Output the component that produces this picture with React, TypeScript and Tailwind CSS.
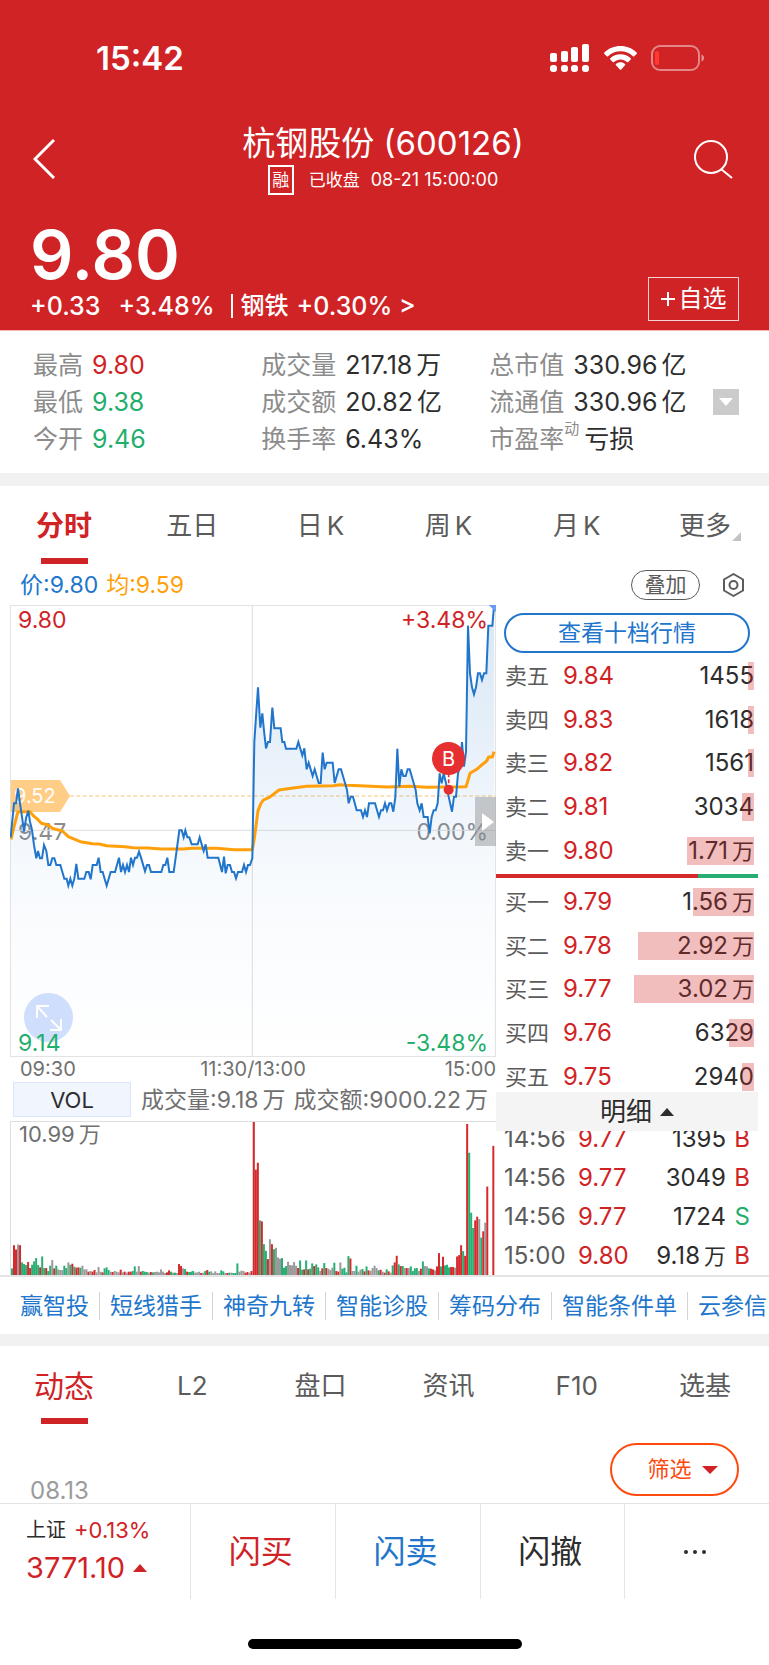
import { useState } from 'react';
import clsx from 'clsx';

interface Level {
  name: string;
  price: string;
  volume: string;
  unit?: string;
  bar: number;
}

interface Trade {
  time: string;
  price: string;
  volume: string;
  unit?: string;
  side: 'B' | 'S';
}

const stats = [
  [
    { label: '最高', value: '9.80', color: 'text-[#d02326]' },
    { label: '最低', value: '9.38', color: 'text-[#1fae6c]' },
    { label: '今开', value: '9.46', color: 'text-[#1fae6c]' },
  ],
  [
    { label: '成交量', value: '217.18', unit: '万', color: 'text-[#2d2d2d]' },
    { label: '成交额', value: '20.82', unit: '亿', color: 'text-[#2d2d2d]' },
    { label: '换手率', value: '6.43%', color: 'text-[#2d2d2d]' },
  ],
  [
    { label: '总市值', value: '330.96', unit: '亿', color: 'text-[#2d2d2d]' },
    { label: '流通值', value: '330.96', unit: '亿', color: 'text-[#2d2d2d]' },
    { label: '市盈率', sup: '动', value: '亏损', color: 'text-[#2d2d2d]' },
  ],
];

const chartTabs = ['分时', '五日', '日K', '周K', '月K', '更多'];
const infoTabs = ['动态', 'L2', '盘口', '资讯', 'F10', '选基'];
const tools = ['赢智投', '短线猎手', '神奇九转', '智能诊股', '筹码分布', '智能条件单', '云参信'];

const asks: Level[] = [
  { name: '卖五', price: '9.84', volume: '1455', bar: 6 },
  { name: '卖四', price: '9.83', volume: '1618', bar: 6 },
  { name: '卖三', price: '9.82', volume: '1561', bar: 6 },
  { name: '卖二', price: '9.81', volume: '3034', bar: 12 },
  { name: '卖一', price: '9.80', volume: '1.71', unit: '万', bar: 67 },
];

const bids: Level[] = [
  { name: '买一', price: '9.79', volume: '1.56', unit: '万', bar: 61 },
  { name: '买二', price: '9.78', volume: '2.92', unit: '万', bar: 116 },
  { name: '买三', price: '9.77', volume: '3.02', unit: '万', bar: 120 },
  { name: '买四', price: '9.76', volume: '6329', bar: 25 },
  { name: '买五', price: '9.75', volume: '2940', bar: 12 },
];

const trades: Trade[] = [
  { time: '14:56', price: '9.77', volume: '1395', side: 'B' },
  { time: '14:56', price: '9.77', volume: '3049', side: 'B' },
  { time: '14:56', price: '9.77', volume: '1724', side: 'S' },
  { time: '15:00', price: '9.80', volume: '9.18', unit: '万', side: 'B' },
];

const pricePoints =
  '32,712 42,610 48,610 54,565 60,610 66,650 72,695 78,655 85,632 90,665 96,690 102,735 109,775 114,753 120,775 126,775 132,735 139,753 145,795 151,795 157,775 163,775 169,795 181,795 193,836 200,836 205,857 211,836 217,857 223,836 229,792 235,836 253,836 259,816 266,816 272,838 278,795 290,795 296,773 302,816 308,816 320,857 332,816 345,816 357,773 363,816 369,795 375,816 381,795 387,816 393,773 399,795 405,773 411,773 417,755 423,773 435,814 441,795 447,795 453,816 484,816 490,795 496,795 502,773 508,816 521,816 527,773 538,691 545,691 551,712 556,691 562,712 568,712 575,733 593,733 599,712 605,733 611,753 617,733 623,773 655,773 666,816 672,770 677,820 683,795 690,795 696,816 702,816 708,835 714,816 726,816 732,795 738,816 744,795 750,795 757,775 ' +
  '763,425 774,262 781,383 787,340 792,392 798,445 804,426 810,426 817,323 823,385 842,385 847,426 853,426 858,446 889,446 895,426 907,466 913,445 920,508 926,488 938,528 944,508 956,549 962,549 968,458 974,508 980,488 998,488 1004,549 1016,508 1023,508 1035,549 1041,570 1046,610 1052,590 1059,590 1070,631 1083,631 1089,651 1095,631 1101,651 1107,610 1125,610 1137,651 1143,631 1149,631 1155,610 1161,631 1168,610 1174,610 1180,635 1186,592 1192,446 1198,560 1204,508 1210,528 1217,528 1223,508 1229,508 1241,549 1247,570 1252,610 1259,631 1265,610 1271,651 1283,651 1289,700 1295,651 1301,631 1307,631 1313,610 1319,520 1325,550 1331,520 1337,545 1346,590 1356,635 1362,590 1368,590 1374,520 1380,500 1386,426 1392,500 1398,455 1404,77 1410,220 1416,262 1422,283 1428,262 1434,220 1440,220 1446,240 1452,220 1459,220 1465,77 1477,77 1482,20';

const averagePoints =
  '33,718 42,680 54,635 90,635 103,650 112,657 124,670 145,675 157,685 187,693 205,710 241,725 278,731 297,732 320,737 375,740 400,743 444,744 484,747 550,747 575,745 650,745 702,749 757,749 763,715 774,632 782,612 790,600 808,592 837,570 885,563 920,559 1000,557 1020,554 1040,556 1080,557 1160,561 1230,559 1280,562 1398,560 1402,548 1410,520 1430,508 1445,495 1460,483 1466,471 1477,471 1482,455';

// r = up, g = down, k = unchanged, followed by the bar height
const morning =
  'g20 r90 r77 k92 r90 g38 g33 g30 r39 r21 g31 g41 g51 g30 r23 g56 g21 r21 g12 g28 k45 r20 g28 k17 k15 k15 g28 g21 k38 g31 r34 g25 r22 r23 g22 k28 k17 k17 r10 k12 r10 r15 k8 k24 k10 r8 g20 g23 g15 k10 r9 k12 k10 k8 r16 k8 r10 k7 r10 r10 g12 g26 k10 k27 r10 g12 g10 g9 k7 r9 g8 k9 k10 k8 k17 k10 k6 r8 r14 g10 k7 g7 k6 r33 r27 k20 g18 r10 g9 g10 g12 k7 k8 k10 r6 k7 g12 r15 g10 k11 k6 k11 k6 k6 g14 g11 k6 r6 g7 k7 g6 g6 g35 k10 k13 k12 r7 r9 k7 r12';
const afternoon =
  'r462 r318 r339 g165 r162 g93 g73 r48 k108 r93 g78 k82 k53 k49 g51 g22 g27 k40 k30 k29 k39 k28 r21 g44 g16 r17 g44 r17 g19 g35 r27 g32 g23 k12 r20 g36 r21 k19 k15 k22 g37 r12 r10 k38 g19 g22 g8 g57 r50 k12 k12 g28 k10 k16 g18 r11 g26 r14 k12 k21 k28 k21 g14 r16 k10 r7 g17 r11 k7 g29 r38 r58 g32 r27 g27 k21 r21 k21 g26 g12 g20 g21 k12 r19 g41 k27 k26 g20 r19 r17 k14 r26 r66 g26 r55 g29 g31 g23 r24 r24 k22 r56 r60 r90 g72 r58 r456 g369 g188 g142 r165 r176 k169 g113 r132 k158 r267 k0 k0 r390';

const barColors: Record<string, string> = { r: '#d6292b', g: '#27ae73', k: '#999999' };

function VolumeBars({ data, start }: { data: string; start: number }) {
  return (
    <g>
      {data.split(' ').map((bar, i) => {
        const height = Number(bar.slice(1));
        return <rect key={i} x={start + i * 6.05} y={526 - height} width={6} height={height} fill={barColors[bar[0]]} />;
      })}
    </g>
  );
}

function StatusBar() {
  return (
    <div className="flex h-[116px] items-center justify-between pr-16 pl-24">
      <span className="text-[33px] leading-10 font-semibold">15:42</span>
      <div className="flex items-center gap-[14px]">
        <svg className="h-7 w-10" viewBox="0 0 40 28" fill="#fff">
          <rect x="0" y="9" width="7" height="9" rx="2" />
          <rect x="11" y="7" width="7" height="11" rx="2" />
          <rect x="21" y="3" width="7" height="15" rx="2" />
          <rect x="32" y="0" width="7" height="18" rx="2" />
          <rect x="0" y="21" width="7" height="7" rx="3" />
          <rect x="11" y="21" width="7" height="7" rx="3" />
          <rect x="21" y="21" width="7" height="7" rx="3" />
          <rect x="32" y="21" width="7" height="7" rx="3" />
        </svg>
        <svg className="h-6 w-[33px]" viewBox="0 0 33 24" fill="#fff">
          <path d="M16.5 0C22.600 0 28.400 2.300 32.600 6.500a1 1 0 0 1 0 1.400l-2.400 2.400a1 1 0 0 1-1.300 0C25.600 7.100 21.200 5.300 16.500 5.300S7.400 7.100 4.100 10.300a1 1 0 0 1-1.300 0L.4 7.900a1 1 0 0 1 0-1.400C4.600 2.300 10.400 0 16.500 0Z" />
          <path d="M16.500 8.200c3.900 0 7.500 1.500 10.200 4a1 1 0 0 1 0 1.400l-2.400 2.400a1 1 0 0 1-1.300 0c-1.800-1.600-4.100-2.500-6.500-2.500s-4.700.9-6.500 2.500a1 1 0 0 1-1.300 0l-2.400-2.400a1 1 0 0 1 0-1.400c2.700-2.500 6.300-4 10.200-4Z" />
          <path d="M16.500 16.300c1.700 0 3.300.6 4.500 1.600a1 1 0 0 1 0 1.400l-3.800 4.200a1 1 0 0 1-1.400 0L12 19.300a1 1 0 0 1 0-1.400c1.200-1 2.800-1.600 4.500-1.600Z" />
        </svg>
        <svg className="h-[26px] w-[54px]" viewBox="0 0 54 26">
          <rect x="1" y="1" width="47" height="24" rx="8" fill="none" stroke="#fff" strokeOpacity="0.45" strokeWidth="2" />
          <rect x="4" y="6" width="4" height="14" rx="2" fill="#ff3b30" />
          <path d="M50.500 9.500c1.800.6 2.500 2 2.500 3.500s-.7 2.900-2.500 3.500Z" fill="#fff" fillOpacity="0.5" />
        </svg>
      </div>
    </div>
  );
}

function Tabs({ items, bold }: { items: string[]; bold?: boolean }) {
  const [active, setActive] = useState(items[0]);

  return (
    <nav className="grid h-[78px] grid-cols-6">
      {items.map((item) => (
        <button
          key={item}
          type="button"
          onClick={() => setActive(item)}
          className={clsx(
            'relative flex items-start justify-center pt-5 leading-10',
            item === active ? 'text-[#d02326]' : 'text-[26px] text-[#5b5b5b]',
            item === active && (bold ? 'text-[28px] font-bold' : 'text-[30px]')
          )}
        >
          {item.endsWith('K') ? (
            <span className="flex gap-1">
              <span>{item[0]}</span>
              <span>K</span>
            </span>
          ) : (
            item
          )}
          {item === '更多' && (
            <svg className="absolute right-7 bottom-[23px] h-[9px] w-[9px]" viewBox="0 0 8 8">
              <path d="M8 0v8H0Z" fill="#c4c4c4" />
            </svg>
          )}
          {item === active && <span className="absolute bottom-0 h-[6px] w-[47px] bg-[#d02326]" />}
        </button>
      ))}
    </nav>
  );
}

function LevelTable({ levels, label }: { levels: Level[]; label: string }) {
  return (
    <table aria-label={label} className="h-[219px] w-full text-2xl leading-7">
      <tbody>
        {levels.map((level) => (
          <tr key={level.name}>
            <td className="w-[67px] p-0 pl-[9px] text-[22px] leading-7 text-[#5b5b5b]">{level.name}</td>
            <td className="p-0 leading-7 text-[#d02326]">{level.price}</td>
            <td className="p-0 pr-1">
              <div className="relative flex h-7 items-center justify-end gap-1 text-[#2d2d2d]">
                <span>{level.volume}</span>
                {level.unit && <span className="text-[22px]">{level.unit}</span>}
                <span className="absolute top-0 right-0 h-7 bg-[#d02326]/30" style={{ width: level.bar }} />
              </div>
            </td>
          </tr>
        ))}
      </tbody>
    </table>
  );
}

function PriceChart() {
  return (
    <div className="relative h-[452px] text-[23px] leading-[30px]">
      <span className="absolute top-0 left-2 text-[#d02326]">9.80</span>
      <span className="absolute top-0 right-2 text-[#d02326]">+3.48%</span>
      <span className="absolute top-[212px] left-2 text-[#8c8c8c]">9.47</span>
      <span className="absolute top-[212px] right-2 text-[#8c8c8c]">0.00%</span>
      <div className="absolute top-[175px] left-0 flex h-8 w-[60px] items-center">
        <svg className="absolute inset-0 h-full w-full" viewBox="0 0 60 32">
          <path d="M0 0H50L60 16L50 32H0Z" fill="#ffcd85" />
        </svg>
        <span className="relative pl-1 text-xl text-white">9.52</span>
      </div>
      <button
        type="button"
        aria-label="全屏"
        className="absolute top-[388px] left-[14px] flex h-[49px] w-[49px] items-center justify-center rounded-full bg-[#d0dffd]"
      >
        <svg className="h-[26px] w-[26px]" viewBox="0 0 26 26" fill="none" stroke="#fff" strokeWidth="2">
          <path d="M1 13V1H13M1 1L11 12M15 15L25 25M25 14V25H14" />
        </svg>
      </button>
      <span className="absolute -bottom-px left-2 text-[#1fae6c]">9.14</span>
      <span className="absolute right-2 -bottom-px text-[#1fae6c]">-3.48%</span>
      <svg
        className="pointer-events-none absolute inset-0 h-full w-full"
        viewBox="30 15 1458 1356"
        preserveAspectRatio="none"
        fill="none"
      >
        <defs>
          <linearGradient id="area" x1="0" y1="0" x2="0" y2="1">
            <stop offset="0" stopColor="#2176cc" stopOpacity="0.18" />
            <stop offset="0.6" stopColor="#2176cc" stopOpacity="0.035" />
            <stop offset="1" stopColor="#2176cc" stopOpacity="0" />
          </linearGradient>
        </defs>
        <path d="M31 15V1370M1486 15V1370M30 16H1488M30 1370H1488M757 15V1370M30 691H1488" stroke="#dedede" strokeWidth="3" />
        <path d="M210 588H1488" stroke="#fcd9a6" strokeWidth="4" strokeDasharray="12 7" />
        <polygon points={`32,1370 ${pricePoints} 1482,1370`} fill="url(#area)" />
        <polyline points={averagePoints} stroke="#ff9f0a" strokeWidth="9" strokeLinejoin="round" />
        <polyline points={pricePoints} stroke="#2176cc" strokeWidth="6" />
        <path d="M1466 15H1488V36Z" fill="#6a9cf5" />
        <path d="M1346 520V560" stroke="#e62f31" strokeWidth="5" strokeDasharray="12 6" />
        <circle cx="1346" cy="569" r="15" fill="#e62f31" />
      </svg>
      <span className="absolute top-[137px] right-[31px] flex h-[33px] w-[33px] items-center justify-center rounded-full bg-[#e62f31] text-xl text-white">
        B
      </span>
      <button
        type="button"
        aria-label="收起盘口"
        className="absolute top-[192px] right-0 flex h-[49px] w-[21px] items-center justify-end bg-[#8c8c8c]/45"
      >
        <svg className="h-[18px] w-[14px]" viewBox="0 0 14 18">
          <path d="M0 0L12 9L0 18Z" fill="#fff" />
        </svg>
      </button>
    </div>
  );
}

export default function App() {
  return (
    <div className="w-full overflow-hidden bg-white font-['Inter','Noto_Sans_CJK_SC',sans-serif] text-[#2d2d2d]">
      {/* Header */}
      <header className="h-[331px] border-b border-[#f3b4b5] bg-[#d02326] text-white">
        <StatusBar />
        <div className="flex h-[86px] items-center justify-between pr-9 pl-[33px]">
          <button type="button" aria-label="返回" className="w-10">
            <svg className="h-10 w-[22px]" viewBox="0 0 22 40" fill="none" stroke="#fff" strokeWidth="3">
              <path d="M21 1L2 20L21 39" />
            </svg>
          </button>
          <div className="flex flex-col items-center">
            <h1 className="text-[33px] leading-10">杭钢股份 (600126)</h1>
            <div className="mt-[2px] flex items-center text-[18px] leading-[30px]">
              <span className="mr-[15px] flex h-[30px] w-[26px] items-center justify-center border-2 text-[17px]">融</span>
              <span className="mr-[11px] text-[17px]">已收盘</span>
              <span>08-21 15:00:00</span>
            </div>
          </div>
          <button type="button" aria-label="搜索" className="w-10">
            <svg className="h-10 w-10" viewBox="0 0 40 40" fill="none" stroke="#fff" strokeWidth="2">
              <circle cx="18" cy="18" r="16" />
              <path d="M28 30L39 39" />
            </svg>
          </button>
        </div>
        <div className="flex items-end justify-between pr-[30px] pl-[30px]">
          <div>
            <p className="mt-[14px] text-[68px] leading-[76px] font-semibold">9.80</p>
            <p className="mb-2 flex items-center text-[25px] leading-7 font-medium">
              <span>+0.33</span>
              <span className="ml-[18px]">+3.48%</span>
              <span className="ml-4 h-6 w-[2px] bg-white" />
              <a href="#sector" className="ml-2 flex items-center gap-2">
                <span className="text-2xl leading-7">钢铁</span>
                <span>+0.30% &gt;</span>
              </a>
            </p>
          </div>
          <button type="button" className="mb-[7px] flex h-11 w-[91px] items-center justify-center gap-1 border border-white/80 text-2xl">
            <svg className="h-[14px] w-[14px]" viewBox="0 0 14 14" stroke="#fff" strokeWidth="2">
              <path d="M7 0V14M0 7H14" />
            </svg>
            自选
          </button>
        </div>
      </header>

      {/* Stats */}
      <section className="relative flex h-[142px] pt-[15px] pl-[33px]">
        {stats.map((column, i) => (
          <dl key={i} className="w-[31%] whitespace-nowrap">
            {column.map((item) => (
              <div key={item.label} className="flex h-[37px] items-center text-[25px] leading-9">
                <dt className="flex text-[#8c8c8c]">
                  {item.label}
                  {item.sup && <sup className="top-0 -mt-1 text-[15px] leading-6">{item.sup}</sup>}
                </dt>
                <dd className={clsx('flex gap-1', item.sup ? 'ml-[5px]' : 'ml-[9px]', item.color)}>
                  <span>{item.value}</span>
                  {item.unit && <span>{item.unit}</span>}
                </dd>
              </div>
            ))}
          </dl>
        ))}
        <button
          type="button"
          aria-label="展开"
          className="absolute top-[58px] right-[30px] flex h-[26px] w-[26px] items-center justify-center bg-[#cbcbcb]"
        >
          <svg className="h-2 w-[14px]" viewBox="0 0 14 8">
            <path d="M0 0H14L7 8Z" fill="#fff" />
          </svg>
        </button>
      </section>
      <div className="h-[13px] bg-[#f1f1f1]" />

      {/* Chart tabs */}
      <Tabs items={chartTabs} bold />
      <div className="flex h-[41px] items-center justify-between pr-[25px] pl-5 text-[23px] leading-7">
        <p className="flex gap-2">
          <span className="text-[#2176cc]">价:9.80</span>
          <span className="text-[#ff9f0a]">均:9.59</span>
        </p>
        <div className="flex items-center gap-[23px]">
          <button type="button" className="h-[30px] w-[69px] rounded-full border border-[#5b5b5b] text-[21px] leading-7 text-[#5b5b5b]">
            叠加
          </button>
          <button type="button" aria-label="设置">
            <svg className="h-6 w-[21px]" viewBox="0 0 21 24" fill="none" stroke="#5b5b5b" strokeWidth="2">
              <path d="M10.500 1L20 6.500V17.500L10.500 23L1 17.500V6.500Z" strokeLinejoin="round" />
              <circle cx="10.500" cy="12" r="4" />
            </svg>
          </button>
        </div>
      </div>

      {/* Chart and order book */}
      <section className="flex border-b-2 border-[#e4e4e4]">
        <div className="min-w-0 flex-1 pl-[10px]">
          <PriceChart />
          <div className="grid h-[25px] grid-cols-[1fr_auto_1fr] text-xl leading-6 text-[#707070]">
            <span className="pl-[10px]">09:30</span>
            <span>11:30/13:00</span>
            <span className="text-right">15:00</span>
          </div>
          <div className="flex h-[35px] items-center gap-[10px] pl-[3px] text-[23px] leading-8">
            <button type="button" className="h-[35px] w-[118px] shrink-0 border border-[#dbe6fd] bg-[#f0f5fe] text-[22px] leading-8">
              VOL
            </button>
            <p className="flex gap-2 whitespace-nowrap text-[#707070]">
              <span className="flex gap-1">
                <span>成交量:9.18</span>
                <span>万</span>
              </span>
              <span className="flex gap-1">
                <span>成交额:9000.22</span>
                <span>万</span>
              </span>
            </p>
          </div>
          <div className="relative mt-1 h-[154px] border-t border-l border-[#dedede]">
            <p className="absolute top-0 left-2 flex gap-1 text-[22px] leading-6 text-[#707070]">
              <span>10.99</span>
              <span>万</span>
            </p>
            <svg className="h-full w-full" viewBox="30 64 1458 462" preserveAspectRatio="none">
              <path d="M757 64V526" stroke="#dedede" strokeWidth="3" />
              <VolumeBars data={morning} start={30} />
              <VolumeBars data={afternoon} start={757} />
            </svg>
          </div>
        </div>

        <div className="mr-[11px] w-[262px] pt-2">
          <button
            type="button"
            className="mr-2 ml-2 block h-10 w-[246px] rounded-full border-2 border-[#2176cc] text-[23px] leading-9 text-[#2176cc]"
          >
            查看十档行情
          </button>
          <div className="mt-px">
            <LevelTable levels={asks} label="卖盘" />
          </div>
          <div className="mt-px flex h-1 bg-[#27ae73]">
            <div className="w-[77%] bg-[#d6292b]" />
          </div>
          <div className="mt-[2px] h-[212px] overflow-hidden">
            <LevelTable levels={bids} label="买盘" />
          </div>
          <button type="button" className="flex h-[39px] w-full items-center justify-center gap-2 bg-[#f4f4f4] pl-5 text-[26px] leading-9">
            明细
            <svg className="h-2 w-[14px]" viewBox="0 0 14 8">
              <path d="M7 0L14 8H0Z" fill="#2d2d2d" />
            </svg>
          </button>
          <div className="flex h-[144px] flex-col justify-end overflow-hidden">
            <table aria-label="成交明细" className="w-full text-2xl leading-7">
              <tbody>
                {trades.map((trade, i) => (
                  <tr key={i} className="h-[39px]">
                    <td className="w-[82px] p-0 pt-px pl-[8px] text-[#5b5b5b]">{trade.time}</td>
                    <td className="p-0 pt-px text-[#d02326]">{trade.price}</td>
                    <td className="p-0 pt-px">
                      <div className="flex justify-end gap-1">
                        <span>{trade.volume}</span>
                        {trade.unit && <span className="text-[22px]">{trade.unit}</span>}
                      </div>
                    </td>
                    <td className={clsx('w-8 p-0 pt-px pr-2 text-right', trade.side === 'B' ? 'text-[#d02326]' : 'text-[#1fae6c]')}>
                      {trade.side}
                    </td>
                  </tr>
                ))}
              </tbody>
            </table>
          </div>
        </div>
      </section>

      {/* Tools */}
      <nav className="flex h-[57px] items-center overflow-hidden pl-[10px]">
        {tools.map((tool, i) => (
          <a
            key={tool}
            href="#tools"
            className={clsx(
              'shrink-0 px-[10px] text-[23px] leading-7 text-[#2176cc]',
              i > 0 && 'border-l border-[#d4d4d4]'
            )}
          >
            {tool}
          </a>
        ))}
      </nav>
      <div className="h-3 bg-[#f1f1f1]" />

      {/* News */}
      <Tabs items={infoTabs} />
      <section className="flex h-[79px] items-end justify-between pr-[30px] pl-[30px]">
        <time className="text-2xl leading-6 text-[#9b9b9b]">08.13</time>
        <button
          type="button"
          className="mb-[7px] flex h-[53px] w-[129px] items-center justify-center gap-[10px] rounded-full border-2 border-[#ff4a0e] pl-4 text-[22px] text-[#ff4a0e]"
        >
          筛选
          <svg className="h-2 w-4" viewBox="0 0 16 8">
            <path d="M0 0H16L8 8Z" fill="#d02326" />
          </svg>
        </button>
      </section>

      {/* Bottom bar */}
      <footer className="border-t border-[#e4e4e4]">
        <div className="flex h-[95px]">
          <div className="w-[190px] pt-3 pl-[26px]">
            <p className="flex items-center gap-2 text-[22px] leading-7">
              <span className="text-xl leading-7">上证</span>
              <span className="text-[#d02326]">+0.13%</span>
            </p>
            <p className="mt-[6px] flex items-center gap-2 text-[29px] leading-9 text-[#d02326]">
              3771.10
              <svg className="h-2 w-[14px]" viewBox="0 0 14 8">
                <path d="M7 0L14 8H0Z" fill="#d02326" />
              </svg>
            </p>
          </div>
          <div className="grid flex-1 grid-cols-4 text-[32px]">
            <button type="button" className="border-l border-[#e4e4e4] pr-1 text-[#d02326]">
              闪买
            </button>
            <button type="button" className="border-l border-[#e4e4e4] pr-1 text-[#2176cc]">
              闪卖
            </button>
            <button type="button" className="border-l border-[#e4e4e4] pr-1">
              闪撤
            </button>
            <button type="button" aria-label="更多操作" className="flex items-center justify-center border-l border-[#e4e4e4] pr-1">
              <svg className="h-1 w-[22px]" viewBox="0 0 22 4" fill="#2d2d2d">
                <circle cx="2" cy="2" r="2" />
                <circle cx="11" cy="2" r="2" />
                <circle cx="20" cy="2" r="2" />
              </svg>
            </button>
          </div>
        </div>
        <div className="flex h-[66px] items-end justify-center pb-4">
          <div className="h-[10px] w-[274px] rounded-full bg-black" />
        </div>
      </footer>
    </div>
  );
}
